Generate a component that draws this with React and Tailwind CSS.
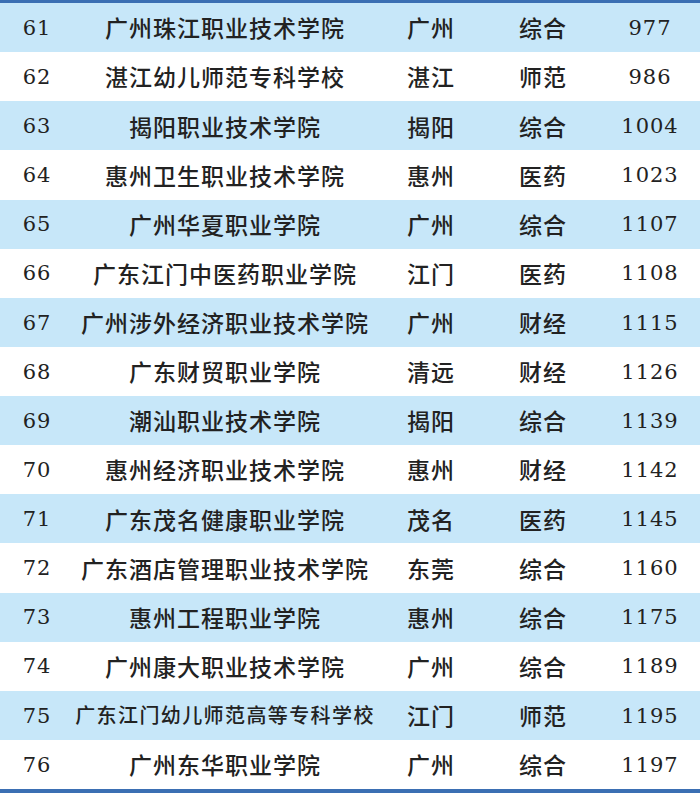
import React from "react";

const rows = [
  ["61", "广州珠江职业技术学院", "广州", "综合", "977"],
  ["62", "湛江幼儿师范专科学校", "湛江", "师范", "986"],
  ["63", "揭阳职业技术学院", "揭阳", "综合", "1004"],
  ["64", "惠州卫生职业技术学院", "惠州", "医药", "1023"],
  ["65", "广州华夏职业学院", "广州", "综合", "1107"],
  ["66", "广东江门中医药职业学院", "江门", "医药", "1108"],
  ["67", "广州涉外经济职业技术学院", "广州", "财经", "1115"],
  ["68", "广东财贸职业学院", "清远", "财经", "1126"],
  ["69", "潮汕职业技术学院", "揭阳", "综合", "1139"],
  ["70", "惠州经济职业技术学院", "惠州", "财经", "1142"],
  ["71", "广东茂名健康职业学院", "茂名", "医药", "1145"],
  ["72", "广东酒店管理职业技术学院", "东莞", "综合", "1160"],
  ["73", "惠州工程职业学院", "惠州", "综合", "1175"],
  ["74", "广州康大职业技术学院", "广州", "综合", "1189"],
  ["75", "广东江门幼儿师范高等专科学校", "江门", "师范", "1195"],
  ["76", "广州东华职业学院", "广州", "综合", "1197"],
];

const cjk = { fontFamily: '"Noto Sans CJK SC", "Noto Sans", sans-serif' };
const serif = { fontFamily: '"DejaVu Serif", "Liberation Serif", serif' };

export default function App() {
  return (
    <div className="w-[700px] h-[793px] bg-white flex flex-col text-[#222]">
      <div className="h-[3px] bg-[#3b6fb3]" />
      <div className="h-[786px] grid grid-rows-[repeat(16,1fr)]">
        {rows.map((r, i) => {
          const long = r[1].length > 12;
          return (
            <div
              key={r[0]}
              className={`grid grid-cols-[74px_302px_110px_114px_100px] items-center ${
                i % 2 === 0 ? "bg-[#c7e7f9]" : "bg-white"
              }`}
            >
              <div className="text-center text-[21px] tracking-[1px] pt-[2px]" style={serif}>
                {r[0]}
              </div>
              <div
                className={`text-center whitespace-nowrap font-medium ${
                  long ? "text-[20px] tracking-[1.4px]" : "text-[23px] tracking-[1px]"
                }`}
                style={cjk}
              >
                {r[1]}
              </div>
              <div className="text-center text-[23px] tracking-[1px] font-medium" style={cjk}>
                {r[2]}
              </div>
              <div className="text-center text-[23px] tracking-[1px] font-medium" style={cjk}>
                {r[3]}
              </div>
              <div className="text-center text-[21px] tracking-[1px] pt-[2px]" style={serif}>
                {r[4]}
              </div>
            </div>
          );
        })}
      </div>
      <div className="h-[4px] bg-[#3b6fb3]" />
    </div>
  );
}
